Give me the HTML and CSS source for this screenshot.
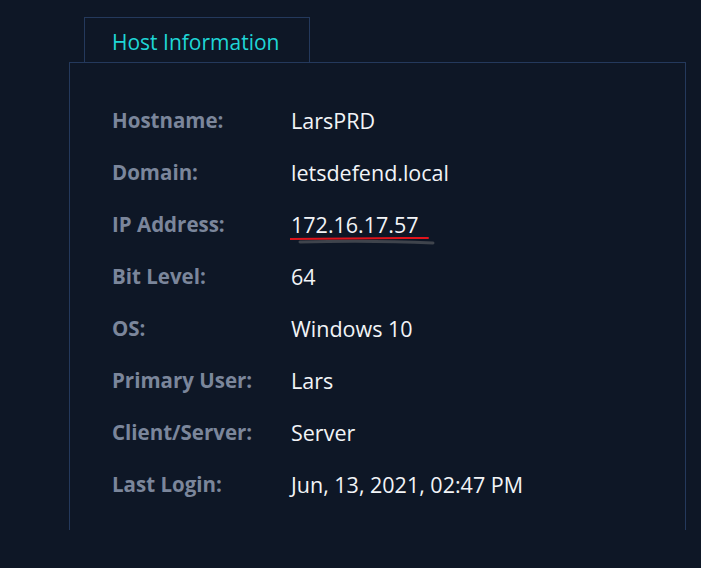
FILE: index.html
```html
<!DOCTYPE html>
<html>
<head>
<meta charset="utf-8">
<link rel="stylesheet" href="styles.css">
</head>
<body>
<div class="page">
  <div class="tab">Host Information</div>
  <div class="panel">
    <div class="rows">
      <div class="row"><span class="label">Hostname:</span><span class="value">LarsPRD</span></div>
      <div class="row"><span class="label">Domain:</span><span class="value">letsdefend.local</span></div>
      <div class="row"><span class="label">IP Address:</span><span class="value marked">172.16.17.57<svg class="mark" width="150" height="12" viewBox="0 0 150 12"><path d="M10 6 C 50 5, 100 5, 143 7" stroke="#3f444c" stroke-width="3" fill="none" stroke-linecap="round"/><path d="M0 3 C 40 2.5, 90 2, 138 2" stroke="#e0141c" stroke-width="2" fill="none" stroke-linecap="round"/></svg></span></div>
      <div class="row"><span class="label">Bit Level:</span><span class="value">64</span></div>
      <div class="row"><span class="label">OS:</span><span class="value">Windows 10</span></div>
      <div class="row"><span class="label">Primary User:</span><span class="value">Lars</span></div>
      <div class="row"><span class="label">Client/Server:</span><span class="value">Server</span></div>
      <div class="row"><span class="label">Last Login:</span><span class="value">Jun, 13, 2021, 02:47 PM</span></div>
    </div>
  </div>
</div>
</body>
</html>
```

FILE: styles.css
```css
html, body {
  margin: 0;
  padding: 0;
  background: #0e1726;
}
body {
  width: 701px;
  height: 568px;
  overflow: hidden;
  font-family: "Open Sans", "Noto Sans", sans-serif;
}
.page {
  padding: 17px 0 0 69px;
}
.tab {
  margin-left: 15px;
  width: 226px;
  height: 45px;
  box-sizing: border-box;
  border: 1px solid #24395c;
  border-bottom: none;
  color: #1fd6d6;
  font-size: 21px;
  line-height: 48px;
  padding-left: 27px;
}
.panel {
  width: 617px;
  height: 468px;
  box-sizing: border-box;
  border: 1px solid #24395c;
  border-bottom: none;
}
.rows {
  padding: 31px 0 0 42px;
  display: flex;
  flex-direction: column;
}
.row {
  display: flex;
  height: 52px;
  align-items: center;
}
.label {
  width: 179px;
  color: #7b869b;
  font-weight: 700;
  font-size: 20.5px;
}
.value {
  color: #f2f4f7;
  font-size: 21.5px;
}
.marked {
  position: relative;
}
.mark {
  position: absolute;
  left: -1px;
  top: 26px;
}
```
